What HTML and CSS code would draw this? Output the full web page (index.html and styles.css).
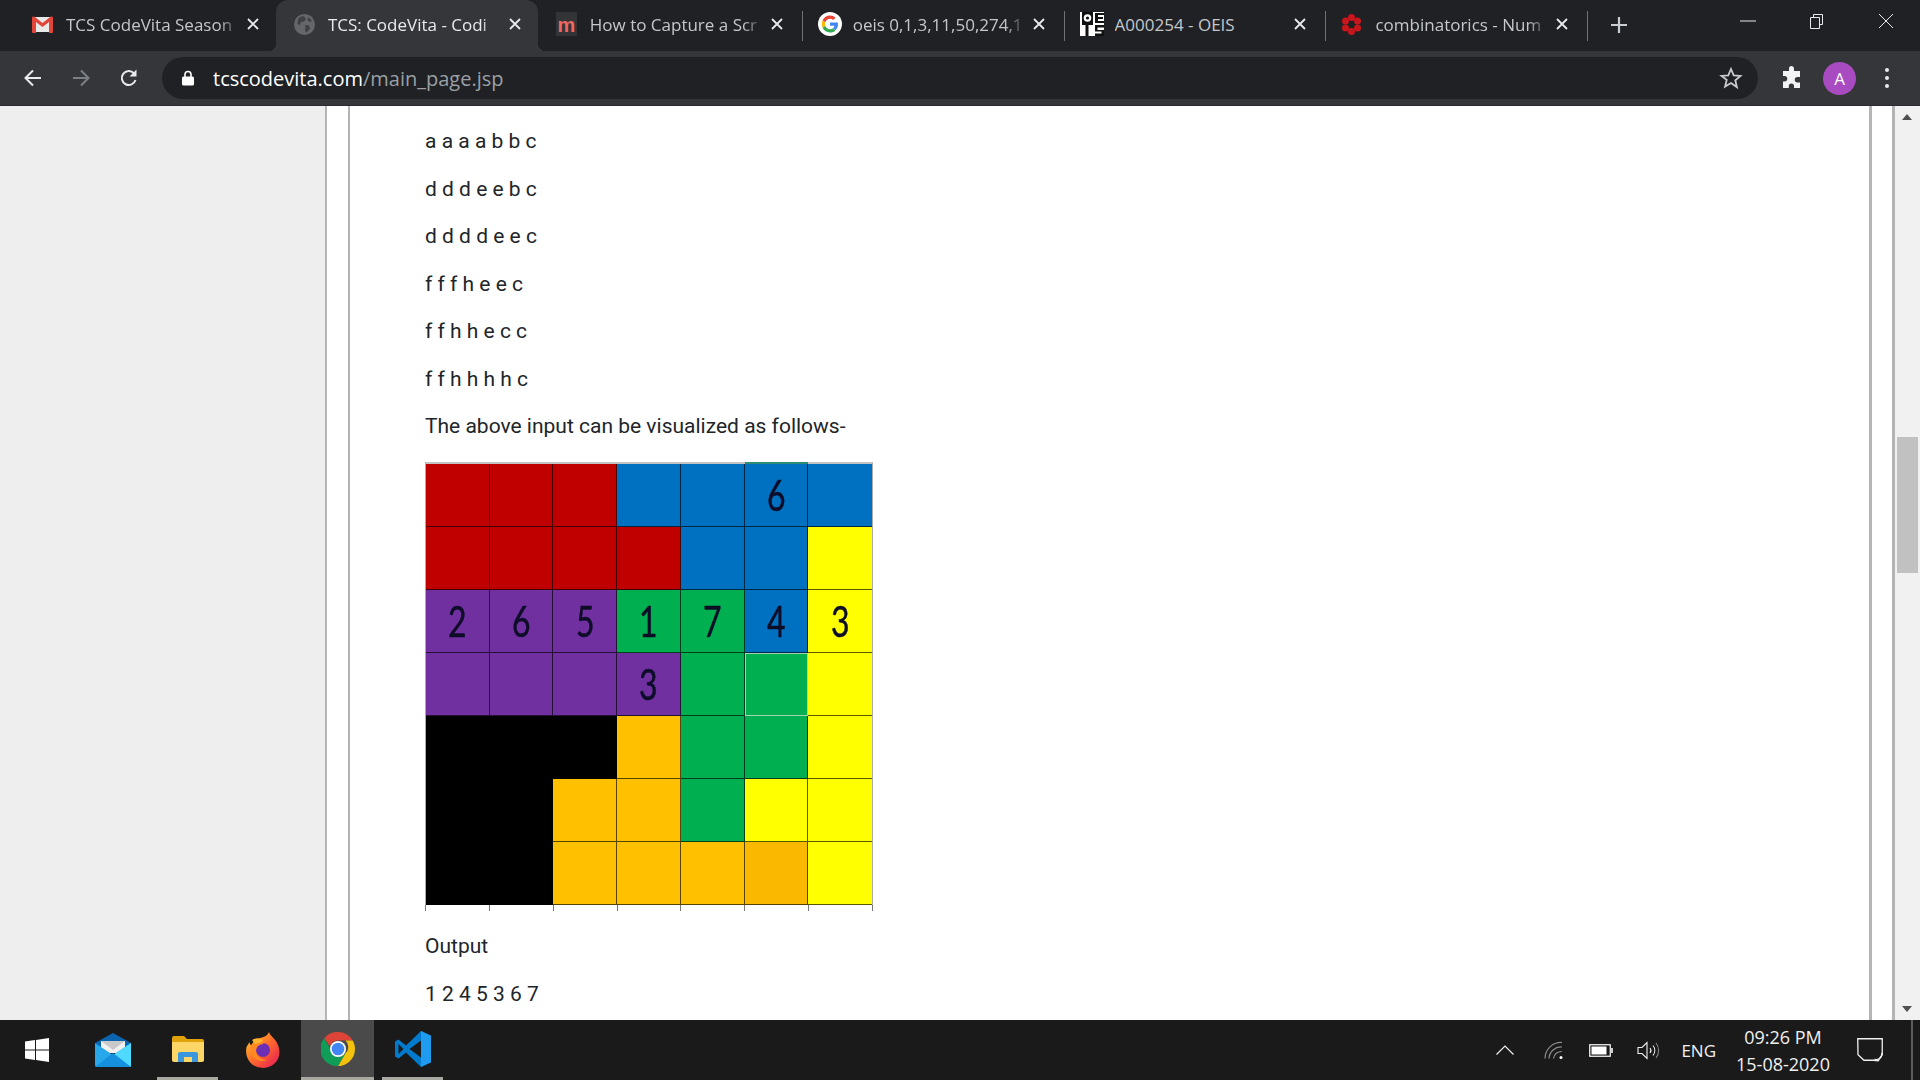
FILE: index.html
```html
<!DOCTYPE html>
<html lang="en">
<head>
    <meta charset="UTF-8">
    <meta name="viewport" content="width=device-width, initial-scale=1.0">
    <title>TCS: CodeVita</title>
    <link rel="stylesheet" href="styles.css">
</head>
<body>
    <div class="tabstrip">
        <div class="tab">
            <svg class="favicon" viewBox="0 0 21 21"><path d="M1 3h19v15H1z" fill="#e9e9e9"/><path d="M3 5l7.500 6.500L18 5v2l-7.500 6L3 7z" fill="#cfcfcf"/><path d="M0 4a1.500 1.500 0 0 1 2.500-1.200L10.500 9l8-6.200A1.500 1.500 0 0 1 21 4v14a1 1 0 0 1-1 1h-3V8l-6.500 5L4 8v11H1a1 1 0 0 1-1-1z" fill="#e2453a"/></svg>
            <span class="tab-title fade">TCS CodeVita Season</span>
            <svg class="tab-close" viewBox="0 0 12 12"><path d="M1 1l10 10M11 1L1 11"/></svg>
        </div>
        <div class="tab active">
            <svg class="favicon" viewBox="0 0 21 21"><circle cx="10.500" cy="10.500" r="10.500" fill="#64666a"/><path d="M4 5c2-2 4-3 6-2.500L12 5l-2 2.500-3 .5-1 3-2.500-1zM11 11l4 .5 1 3-3.500 4-1.500-1.500.5-3zM14.500 3l3.500 4-2.500 1-2-2z" fill="#3f4044"/></svg>
            <span class="tab-title fade">TCS: CodeVita - Codi</span>
            <svg class="tab-close" viewBox="0 0 12 12"><path d="M1 1l10 10M11 1L1 11"/></svg>
        </div>
        <div class="tab sep">
            <span class="favicon fav-m">m</span>
            <span class="tab-title fade">How to Capture a Scr</span>
            <svg class="tab-close" viewBox="0 0 12 12"><path d="M1 1l10 10M11 1L1 11"/></svg>
        </div>
        <div class="tab sep">
            <svg class="favicon wide" viewBox="0 0 24 24"><circle cx="12" cy="12" r="12" fill="#fff"/><path d="M20 12.300c0-.6-.1-1.200-.2-1.700H12v3.200h4.500c-.2 1-.8 1.900-1.700 2.500l2.600 2c1.600-1.400 2.600-3.500 2.600-6z" fill="#4285f4"/><path d="M12 20.500c2.300 0 4.200-.8 5.400-2.100l-2.600-2c-.7.500-1.600.8-2.800.8-2.200 0-4-1.500-4.700-3.500l-2.700 2.100c1.400 2.800 4.100 4.700 7.400 4.700z" fill="#34a853"/><path d="M7.300 13.700c-.4-1.100-.4-2.300 0-3.400L4.600 8.200c-1.100 2.300-1.100 5.300 0 7.600z" fill="#fbbc05"/><path d="M12 6.800c1.200 0 2.300.4 3.200 1.200l2.300-2.300C16 4.300 14.100 3.500 12 3.500c-3.300 0-6 1.900-7.400 4.700l2.700 2.100c.7-2 2.500-3.500 4.700-3.500z" fill="#ea4335"/></svg>
            <span class="tab-title fade">oeis 0,1,3,11,50,274,1</span>
            <svg class="tab-close" viewBox="0 0 12 12"><path d="M1 1l10 10M11 1L1 11"/></svg>
        </div>
        <div class="tab sep">
            <svg class="favicon wide" viewBox="0 0 24 24"><rect width="24" height="24" fill="#fff"/><path d="M2 0h11v13H8.500v11h-3V13H2z" fill="#111"/><circle cx="7.500" cy="6" r="3.800" fill="#fff"/><circle cx="7.500" cy="6" r="1.600" fill="#111"/><path d="M15 1h9v2h-6v2h5v2h-5v2h6v2h-9zM15 13h9v2.500h-6.500V18H24v6h-9v-2.500h6.500V19.500H15z" fill="#111"/></svg>
            <span class="tab-title">A000254 - OEIS</span>
            <svg class="tab-close" viewBox="0 0 12 12"><path d="M1 1l10 10M11 1L1 11"/></svg>
        </div>
        <div class="tab sep">
            <svg class="favicon" viewBox="0 0 21 21"><g fill="#c8161d"><circle cx="10.500" cy="3.500" r="3.500"/><circle cx="16.500" cy="7" r="3.500"/><circle cx="16.500" cy="14" r="3.500"/><circle cx="10.500" cy="17.500" r="3.500"/><circle cx="4.500" cy="14" r="3.500"/><circle cx="4.500" cy="7" r="3.500"/></g><circle cx="10.500" cy="10.500" r="2.800" fill="#202124"/></svg>
            <span class="tab-title fade">combinatorics - Num</span>
            <svg class="tab-close" viewBox="0 0 12 12"><path d="M1 1l10 10M11 1L1 11"/></svg>
        </div>
        <svg class="new-tab" viewBox="0 0 18 18"><path d="M9 1v16M1 9h16"/></svg>
        <div class="window-btns">
            <svg viewBox="0 0 16 16"><path d="M0 8h16"/></svg>
            <svg viewBox="0 0 16 16"><path d="M1.500 4.500h9v11h-9zM4.500 4.500v-3h9v10h-3"/></svg>
            <svg viewBox="0 0 16 16"><path d="M1 1l14 14M15 1L1 15"/></svg>
        </div>
    </div>

    <div class="toolbar">
        <svg class="nav-icon" viewBox="0 0 20 20"><path d="M18 10H3M10 2.500L2.500 10l7.500 7.500"/></svg>
        <svg class="nav-icon off" viewBox="0 0 20 20"><path d="M2 10h15M10 2.500l7.500 7.500-7.500 7.500"/></svg>
        <svg class="nav-icon" viewBox="0 0 20 20"><path d="M16.500 12a7 7 0 1 1-1.600-6.800"/><path class="solid" d="M17.500 1.500v7h-7z"/></svg>
        <div class="omnibox">
            <svg class="lock" viewBox="0 0 12 16"><path d="M3 7V4.500a3 3 0 0 1 6 0V7" fill="none" stroke="#fff" stroke-width="1.600"/><rect y="6.500" width="12" height="9" rx="1.500" fill="#fff"/></svg>
            <span class="url">tcscodevita.com<span class="url-path">/main_page.jsp</span></span>
            <svg class="star" viewBox="0 0 24 24"><path d="M12 3l2.700 6.300 6.800.6-5.200 4.500 1.600 6.700L12 17l-5.900 3.600 1.600-6.700L2.500 9.900l6.800-.6z"/></svg>
        </div>
        <svg class="ext" viewBox="0 0 24 24"><path d="M9 2.500a2.500 2.500 0 0 1 5 0V5h6v6h-2.500a2.700 2.700 0 0 0 0 5.500H20V22h-6v-2a2.600 2.600 0 0 0-5.200 0v2H3v-6.500h1.500a2.700 2.700 0 0 0 0-5.500H3V5h6z" fill="#f1f3f4"/></svg>
        <div class="avatar">A</div>
        <div class="menu-dots"><i></i><i></i><i></i></div>
    </div>

    <div class="viewport">
        <div class="page">
            <div class="sheet">
                <div class="panel">
                    <p>a a a a b b c</p>
                    <p>d d d e e b c</p>
                    <p>d d d d e e c</p>
                    <p>f f f h e e c</p>
                    <p>f f h h e c c</p>
                    <p>f f h h h h c</p>
                    <p>The above input can be visualized as follows-</p>
                    <div class="board">
                        <div class="cell red"></div><div class="cell red"></div><div class="cell red"></div><div class="cell blue"></div><div class="cell blue"></div><div class="cell blue cap"><span>6</span></div><div class="cell blue"></div>
                        <div class="cell red"></div><div class="cell red"></div><div class="cell red"></div><div class="cell red"></div><div class="cell blue"></div><div class="cell blue"></div><div class="cell yellow"></div>
                        <div class="cell purple"><span>2</span></div><div class="cell purple"><span>6</span></div><div class="cell purple"><span>5</span></div><div class="cell green"><span>1</span></div><div class="cell green"><span>7</span></div><div class="cell blue"><span>4</span></div><div class="cell yellow"><span>3</span></div>
                        <div class="cell purple"></div><div class="cell purple"></div><div class="cell purple"></div><div class="cell purple"><span>3</span></div><div class="cell green"></div><div class="cell green picked"></div><div class="cell yellow"></div>
                        <div class="cell black"></div><div class="cell black"></div><div class="cell black"></div><div class="cell orange"></div><div class="cell green"></div><div class="cell green"></div><div class="cell yellow"></div>
                        <div class="cell black"></div><div class="cell black"></div><div class="cell orange"></div><div class="cell orange"></div><div class="cell green"></div><div class="cell yellow"></div><div class="cell yellow"></div>
                        <div class="cell black"></div><div class="cell black"></div><div class="cell orange"></div><div class="cell orange"></div><div class="cell orange"></div><div class="cell orange dark"></div><div class="cell yellow"></div>
                    </div>
                    <div class="ticks"><i></i><i></i><i></i><i></i><i></i><i></i><i></i></div>
                    <p>Output</p>
                    <p>1 2 4 5 3 6 7</p>
                </div>
            </div>
        </div>
        <div class="scrollbar">
            <div class="arrow-up"></div>
            <div class="thumb"></div>
            <div class="arrow-down"></div>
        </div>
    </div>

    <div class="taskbar">
        <div class="task start">
            <svg viewBox="0 0 24 24" width="24" height="24"><path d="M0 3.500L10 2v9.500H0zM11 1.900L24 0v11.500H11zM0 12.500h10V22L0 20.500zM11 12.500h13V24l-13-1.900z" fill="#fff"/></svg>
        </div>
        <div class="task">
            <svg viewBox="0 0 36 34" width="36" height="34"><path d="M18 0l18 10v4H0v-4z" fill="#0a64b0"/><path d="M6 8h24v12H6z" fill="#f1f1f1"/><path d="M6 8h24l-12 9z" fill="#c9c9c9"/><path d="M0 10l18 12 18-12v22a2 2 0 0 1-2 2H2a2 2 0 0 1-2-2z" fill="#28a8ea"/><path d="M18 22l18-12v24z" fill="#50d9ff"/><path d="M0 34l18-14 18 14z" fill="#1490df"/></svg>
        </div>
        <div class="task open">
            <svg viewBox="0 0 32 26" width="32" height="26"><path d="M0 2a2 2 0 0 1 2-2h10l3 3h15a2 2 0 0 1 2 2v4H0z" fill="#e0a30c"/><path d="M0 6h32v18a2 2 0 0 1-2 2H2a2 2 0 0 1-2-2z" fill="#fcd768"/><path d="M6 26v-8a2 2 0 0 1 2-2h16a2 2 0 0 1 2 2v8h-6v-5h-8v5z" fill="#3a96dd"/></svg>
        </div>
        <div class="task">
            <svg viewBox="0 0 34 36" width="34" height="36"><defs><linearGradient id="ff" x1="0" y1="0" x2="1" y2="1"><stop offset="0" stop-color="#ffd02e"/><stop offset=".5" stop-color="#ff6a2b"/><stop offset="1" stop-color="#e3145c"/></linearGradient></defs><path d="M23 0c1 4 7 7 9 13 3 8 1 15-4 19-6 5-15 5-21 1C2 29-1 23 .5 15l3-5c0 2 1 3 2 3 2-4 5-6 9-7 3-1 7-2 8.500-6z" fill="url(#ff)"/><circle cx="17" cy="18" r="7" fill="#6b2fb5"/><path d="M5 13c4-3 10-3 13-1-5 0-8 3-8 7 0 5 5 9 11 9-7 3-15-1-16-8z" fill="#ff8a1f"/><path d="M6 8c3-2 8-3 11 1l-4 2-4 1z" fill="#ffb52e"/></svg>
        </div>
        <div class="task open current">
            <svg viewBox="0 0 34 34" width="34" height="34"><path d="M17 0a17 17 0 0 1 14.700 8.500H17a8.500 8.500 0 0 0-8 5.800L3.100 6.300A17 17 0 0 1 17 0z" fill="#db4437"/><path d="M31.700 8.500A17 17 0 0 1 17 34l7.400-12.700a8.500 8.500 0 0 0 0-12.800z" fill="#f4c20d"/><path d="M17 34A17 17 0 0 1 3.100 6.300L9.600 17a8.500 8.500 0 0 0 9 8.300l5.800-4z" fill="#0f9d58"/><circle cx="17" cy="17" r="8" fill="#fff"/><circle cx="17" cy="17" r="6.300" fill="#4285f4"/></svg>
        </div>
        <div class="task open">
            <svg viewBox="0 0 36 36" width="36" height="36"><path d="M26 0l10 4.800v26.400L26 36 11 21.500 3.500 27.500 0 25.500V10.500l3.500-2L11 14.500z" fill="#007acc"/><path d="M26 9.500L14.500 18 26 26.500z" fill="#1a1a1a"/><path d="M3.500 13l5 5-5 5z" fill="#1a1a1a"/><path d="M26 0l10 4.800v26.400L26 36z" fill="#1f9cf0"/></svg>
        </div>
        <div class="tray">
            <svg class="tray-chevron" viewBox="0 0 18 10"><path d="M.5 9.500L9 1l8.500 8.500"/></svg>
            <svg class="tray-wifi" viewBox="0 0 20 18"><path d="M1 17.500A16 16 0 0 1 18 1.500M5 17.500A12 12 0 0 1 18 6M9.500 17.500A8 8 0 0 1 18 10.500"/><circle cx="17" cy="16.500" r="1.500"/></svg>
            <svg class="tray-battery" viewBox="0 0 24 13"><rect x=".75" y=".75" width="20.500" height="11.500" fill="none" stroke="#fff" stroke-width="1.200"/><rect x="2.500" y="2.500" width="15" height="8" fill="#fff"/><rect x="22" y="4" width="2" height="5" fill="#ccc"/></svg>
            <svg class="tray-sound" viewBox="0 0 23 19"><path d="M1 6.500h4L10 1.500v16l-5-5H1z"/><path d="M13 7a4 4 0 0 1 0 5M16 4.500a8 8 0 0 1 0 10"/><path class="dim" d="M19 2a12 12 0 0 1 0 15"/></svg>
            <span class="tray-lang">ENG</span>
            <div class="clock"><span>09:26 PM</span><span>15-08-2020</span></div>
            <svg class="tray-note" viewBox="0 0 26 25"><path d="M.75.750h24.500v16l-2 2.500-2 3.500-5-.5H7l-6-5.500z"/><path d="M24.500 15a5 5 0 0 1-7 6"/></svg>
            <div class="show-desktop"></div>
        </div>
    </div>
</body>
</html>
```

FILE: styles.css
```css
* {
    box-sizing: border-box;
}
html, body {
    height: 100%;
}
body {
    margin: 0;
    display: flex;
    flex-direction: column;
    overflow: hidden;
    font-family: "Open Sans", "Noto Sans", sans-serif;
    background: #1a1a1a;
}

/* tabs */
.tabstrip {
    height: 51px;
    flex: none;
    display: flex;
    padding-left: 14px;
    background: #202124;
}
.tab {
    position: relative;
    width: 261.900px;
    height: 51px;
    flex: none;
    display: flex;
    align-items: center;
    padding: 0 17px 3px 18px;
    color: #c4c7cb;
    font-size: 17px;
}
.tab.active {
    background: #35363a;
    color: #e8eaed;
    border-radius: 12px 12px 0 0;
}
.tab.active::before, .tab.active::after {
    content: "";
    position: absolute;
    bottom: 0;
    width: 8px;
    height: 8px;
}
.tab.active::before {
    left: -8px;
    background: radial-gradient(circle at 0 0, #202124 8px, #35363a 8.500px);
}
.tab.active::after {
    right: -8px;
    background: radial-gradient(circle at 100% 0, #202124 8px, #35363a 8.500px);
}
.tab.sep::after {
    content: "";
    position: absolute;
    right: -3px;
    top: 11px;
    width: 1px;
    height: 30px;
    background: #6f7276;
}
.favicon {
    width: 21px;
    height: 21px;
    flex: none;
    margin-right: 13px;
}
.favicon.wide {
    width: 24px;
    height: 24px;
    margin-right: 11px;
}
.fav-m {
    display: block;
    height: 24px;
    background: #333436;
    color: #f2685f;
    font: bold 20px/26px "Liberation Sans", sans-serif;
    text-align: center;
}
.tab-title {
    flex: 1;
    min-width: 0;
    overflow: hidden;
    white-space: nowrap;
}
.fade {
    -webkit-mask-image: linear-gradient(90deg, #000 88%, transparent);
    mask-image: linear-gradient(90deg, #000 88%, transparent);
}
.tab-close {
    width: 12px;
    height: 12px;
    flex: none;
    margin-left: 7px;
    fill: none;
    stroke: #e8eaed;
    stroke-width: 1.800;
}
.new-tab {
    width: 18px;
    height: 18px;
    margin: 16px 0 0 25px;
    fill: none;
    stroke: #c9ccd0;
    stroke-width: 2.200;
}
.window-btns {
    margin-left: auto;
    display: flex;
    gap: 53px;
    padding: 13px 26px 0 0;
    height: 30px;
}
.window-btns svg {
    width: 16px;
    height: 16px;
    fill: none;
    stroke: #e8eaed;
    stroke-width: 1;
}

/* address bar */
.toolbar {
    height: 55px;
    flex: none;
    display: flex;
    align-items: center;
    padding: 0 0 0 23px;
    background: #35363a;
    border-bottom: 1px solid #2a2b2e;
}
.nav-icon {
    width: 20px;
    height: 20px;
    flex: none;
    margin-right: 28px;
    fill: none;
    stroke: #e8eaed;
    stroke-width: 2;
}
.nav-icon.off {
    stroke: #7c7f84;
}
.nav-icon .solid {
    fill: #e8eaed;
    stroke: none;
}
.omnibox {
    width: 1596px;
    height: 42px;
    flex: none;
    margin-left: -5px;
    display: flex;
    align-items: center;
    padding: 0 15px 0 20px;
    background: #202124;
    border-radius: 21px;
}
.lock {
    width: 12px;
    height: 16px;
    flex: none;
    margin-right: 19px;
}
.url {
    flex: 1;
    color: #fff;
    font-size: 20px;
}
.url-path {
    color: #9aa0a6;
}
.star {
    width: 24px;
    height: 24px;
    fill: none;
    stroke: #c9ccd0;
    stroke-width: 1.800;
}
.ext {
    width: 24px;
    height: 24px;
    flex: none;
    margin-left: 22px;
}
.avatar {
    width: 33px;
    height: 33px;
    flex: none;
    margin-left: 19px;
    border-radius: 50%;
    background: #a94bc0;
    color: #fff;
    font-size: 17px;
    line-height: 33px;
    text-align: center;
}
.menu-dots {
    margin-left: 29px;
    display: flex;
    flex-direction: column;
    gap: 4px;
}
.menu-dots i {
    display: block;
    width: 4px;
    height: 4px;
    border-radius: 50%;
    background: #e8eaed;
}

/* page */
.viewport {
    flex: 1;
    min-height: 0;
    display: flex;
    background: #eee;
}
.page {
    flex: 1;
    min-width: 0;
    padding-left: 325px;
    overflow: hidden;
}
.sheet {
    height: 100%;
    padding: 0 20px 0 21px;
    background: #fff;
    border-left: 2px solid #b4b4b4;
    border-right: 3px solid #b4b4b4;
}
.panel {
    height: 100%;
    padding: 20px 0 0 75px;
    background: #fff;
    border-left: 2px solid #b4b4b4;
    border-right: 3px solid #b4b4b4;
    color: #212529;
    font-family: Roboto, "Liberation Sans", sans-serif;
    font-size: 21px;
}
.panel p {
    margin: 0 0 17.500px;
    line-height: 30px;
}
.board {
    width: 448px;
    margin-top: 20.500px;
    display: grid;
    grid-template-columns: repeat(7, 1fr);
    grid-auto-rows: 63.100px;
    border-top: 2px solid #c4c4c4;
    border-left: 1px solid #aaa;
    border-right: 1px solid #aaa;
}
.cell {
    border-right: 1px solid rgba(0, 0, 0, .65);
    border-bottom: 1px solid rgba(0, 0, 0, .65);
    display: flex;
    align-items: center;
    justify-content: center;
    color: #0d0d28;
    font-family: Lato, "Noto Sans", sans-serif;
    font-size: 42px;
    -webkit-text-stroke: .5px #0d0d28;
}
.cell span {
    display: inline-block;
    transform: scaleX(.76);
}
.cell:nth-child(7n) {
    border-right: 0;
}
.red { background: #c00000; }
.blue { background: #0070c0; }
.purple { background: #7030a0; }
.green { background: #00b050; }
.yellow { background: #ffff00; }
.orange { background: #ffc000; }
.orange.dark { background: #fbb800; }
.black { background: #000; }
.picked {
    border: 1px solid #a4d4b6;
}
.cap {
    box-shadow: 0 -2px 0 #2e8a70;
}
.ticks {
    width: 448px;
    height: 6px;
    margin-bottom: 20px;
    display: grid;
    grid-template-columns: repeat(7, 1fr);
    border-right: 1px solid #777;
}
.ticks i {
    border-left: 1px solid #777;
}
.scrollbar {
    width: 25px;
    flex: none;
    position: relative;
    background: #f1f1f1;
}
.thumb {
    position: absolute;
    top: 331px;
    left: 2px;
    width: 21px;
    height: 136px;
    background: #c1c1c1;
}
.arrow-up, .arrow-down {
    position: absolute;
    left: 7px;
    width: 0;
    height: 0;
    border: 5.500px solid transparent;
}
.arrow-up {
    top: 3px;
    border-bottom: 6px solid #505050;
}
.arrow-down {
    bottom: 3px;
    border-top: 6px solid #505050;
}

/* taskbar */
.taskbar {
    height: 60px;
    flex: none;
    display: flex;
    background: #1a1a1a;
}
.task {
    width: 61px;
    height: 60px;
    margin-right: 14px;
    display: flex;
    align-items: center;
    justify-content: center;
    flex: none;
}
.task.start {
    width: 73px;
    margin-right: 9px;
}
.task.open {
    border-bottom: 3px solid #a9a9a2;
}
.task.current {
    width: 73px;
    margin: 0 8px 0 -6px;
    background: #4a4a4a;
}
.tray {
    margin-left: auto;
    display: flex;
    align-items: center;
    color: #f0f0f0;
    font-size: 17px;
}
.tray-chevron {
    width: 18px;
    height: 10px;
    margin-right: 30px;
    fill: none;
    stroke: #f0f0f0;
    stroke-width: 1.200;
}
.tray-wifi {
    width: 20px;
    height: 18px;
    margin-right: 25px;
    fill: none;
    stroke: #8c8c8c;
    stroke-width: 1.200;
}
.tray-wifi circle {
    fill: #fff;
    stroke: none;
}
.tray-battery {
    width: 24px;
    height: 13px;
    margin-right: 24px;
}
.tray-sound {
    width: 23px;
    height: 19px;
    margin-right: 21px;
    fill: none;
    stroke: #f0f0f0;
    stroke-width: 1.100;
}
.tray-sound .dim {
    stroke: #888;
}
.tray-lang {
    margin-right: 20px;
}
.clock {
    width: 94px;
    margin-right: 27px;
    display: flex;
    flex-direction: column;
    align-items: center;
    gap: 5px;
    font-size: 18px;
    line-height: 22px;
    white-space: nowrap;
}
.tray-note {
    width: 26px;
    height: 25px;
    margin-right: 28px;
    fill: none;
    stroke: #f0f0f0;
    stroke-width: 1.300;
}
.show-desktop {
    width: 2px;
    height: 60px;
    margin-right: 7px;
    background: #5a5a5a;
}
```
